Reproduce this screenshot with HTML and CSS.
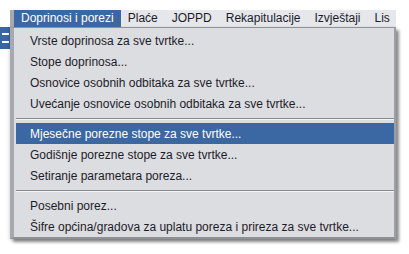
FILE: index.html
```html
<!DOCTYPE html>
<html>
<head>
<meta charset="utf-8">
<link rel="stylesheet" href="styles.css">
</head>
<body>
<div class="backdrop"><span class="bd-w1"></span><span class="bd-w2"></span></div>
<div class="frame">
  <div class="menubar">
    <span class="mitem active">Doprinosi i porezi</span>
    <span class="mitem">Plaće</span>
    <span class="mitem">JOPPD</span>
    <span class="mitem">Rekapitulacije</span>
    <span class="mitem">Izvještaji</span>
    <span class="mitem">Lis</span>
  </div>
  <div class="dropdown">
    <div class="row">Vrste doprinosa za sve tvrtke...</div>
    <div class="row">Stope doprinosa...</div>
    <div class="row">Osnovice osobnih odbitaka za sve tvrtke...</div>
    <div class="row">Uvećanje osnovice osobnih odbitaka za sve tvrtke...</div>
    <div class="sep"></div>
    <div class="row selected">Mjesečne porezne stope za sve tvrtke...</div>
    <div class="row">Godišnje porezne stope za sve tvrtke...</div>
    <div class="row">Setiranje parametara poreza...</div>
    <div class="sep"></div>
    <div class="row">Posebni porez...</div>
    <div class="row">Šifre općina/gradova za uplatu poreza i prireza za sve tvrtke...</div>
  </div>
</div>
</body>
</html>
```

FILE: styles.css
```css
html, body {
  margin: 0;
  padding: 0;
  background: #ffffff;
}
body {
  width: 409px;
  height: 254px;
  overflow: hidden;
  position: relative;
  font-family: "Liberation Sans", Arial, sans-serif;
  font-size: 12px;
  color: #1c1c28;
}
.backdrop {
  position: absolute;
  left: 0;
  top: 27px;
  width: 10px;
  height: 22px;
  background: #3a66a2;
}
.bd-w1, .bd-w2 {
  position: absolute;
  left: 2px;
  width: 7px;
  height: 2px;
  background: #ffffff;
}
.bd-w1 { top: 6px; }
.bd-w2 { top: 14px; }
.frame {
  position: relative;
  margin: 10px 0 0 10px;
  width: 386px;
}
.menubar {
  display: flex;
  height: 17px;
  background: #e6e7eb;
  border-left: 4px solid #a7a9ae;
  box-sizing: border-box;
  overflow: hidden;
  white-space: nowrap;
}
.mitem {
  padding: 0 7px;
  line-height: 17px;
}
.mitem.active {
  background: #3b67a3;
  color: #ffffff;
}
.dropdown {
  background: #dcdde1;
  border-top: 1px solid #8e9095;
  border-left: 4px solid #a7a9ae;
  border-right: 2px solid #9d9fa4;
  border-bottom: 2px solid #8e9095;
  padding: 2px 0 0 2px;
  height: 207px;
  box-sizing: content-box;
  width: 378px;
  box-shadow: 3px 3px 3px rgba(0, 0, 0, 0.45), -1px 1px 3px rgba(0, 0, 0, 0.15);
}
.row {
  height: 21px;
  line-height: 22px;
  padding-left: 14px;
  white-space: nowrap;
}
.row.selected {
  background: #3b67a3;
  color: #ffffff;
}
.sep {
  height: 1px;
  background: #8a8b90;
  border-bottom: 1px solid #f4f4f6;
  margin: 4px 0 3px 0;
}
```
